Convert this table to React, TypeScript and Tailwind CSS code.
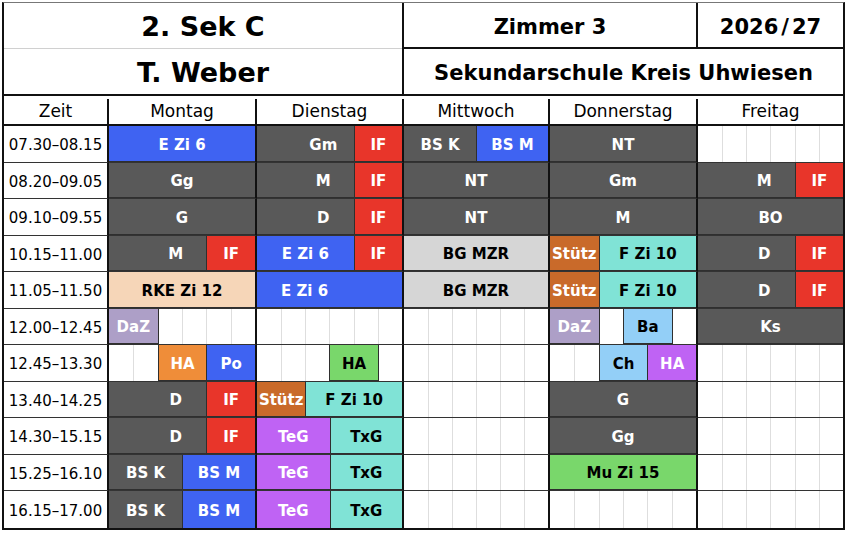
type Seg = { span: number; label?: string; color?: string; shift?: string };

const G = "bg-[#595959] text-white";
const B = "bg-[#3f63f2] text-white";
const R = "bg-[#e8352a] text-white";
const LG = "bg-[#d6d6d6] text-black";
const PE = "bg-[#f6d6b8] text-black";
const ST = "bg-[#c96a2a] text-white";
const TE = "bg-[#80e3d6] text-black";
const DZ = "bg-[#ad9fc7] text-white";
const OR = "bg-[#ef8d39] text-white";
const GR = "bg-[#79d76b] text-black";
const LB = "bg-[#93cff7] text-black";
const PU = "bg-[#bf63f4] text-white";

const S = "pl-[36px]";

const L = (span: number, label: string, color: string, shift = ""): Seg => ({ span, label, color, shift });
const E = (span: number): Seg => ({ span });

const spanClass: Record<number, string> = {
  1: "col-span-1",
  2: "col-span-2",
  3: "col-span-3",
  4: "col-span-4",
  5: "col-span-5",
  6: "col-span-6",
};

const days = ["Montag", "Dienstag", "Mittwoch", "Donnerstag", "Freitag"];

const rows: [string, Seg[][]][] = [
  ["07.30–08.15", [[L(6, "E Zi 6", B)], [L(4, "Gm", G, S), L(2, "IF", R)], [L(3, "BS K", G), L(3, "BS M", B)], [L(6, "NT", G)], [E(6)]]],
  ["08.20–09.05", [[L(6, "Gg", G)], [L(4, "M", G, S), L(2, "IF", R)], [L(6, "NT", G)], [L(6, "Gm", G)], [L(4, "M", G, S), L(2, "IF", R)]]],
  ["09.10–09.55", [[L(6, "G", G)], [L(4, "D", G, S), L(2, "IF", R)], [L(6, "NT", G)], [L(6, "M", G)], [L(6, "BO", G)]]],
  ["10.15–11.00", [[L(4, "M", G, S), L(2, "IF", R)], [L(4, "E Zi 6", B), L(2, "IF", R)], [L(6, "BG MZR", LG)], [L(2, "Stütz", ST), L(4, "F Zi 10", TE)], [L(4, "D", G, S), L(2, "IF", R)]]],
  ["11.05–11.50", [[L(6, "RKE Zi 12", PE)], [L(6, "E Zi 6", B, "pr-[50px]")], [L(6, "BG MZR", LG)], [L(2, "Stütz", ST), L(4, "F Zi 10", TE)], [L(4, "D", G, S), L(2, "IF", R)]]],
  ["12.00–12.45", [[L(2, "DaZ", DZ), E(4)], [E(6)], [E(6)], [L(2, "DaZ", DZ), E(1), L(2, "Ba", LB), E(1)], [L(6, "Ks", G)]]],
  ["12.45–13.30", [[E(2), L(2, "HA", OR), L(2, "Po", B)], [E(3), L(2, "HA", GR), E(1)], [E(6)], [E(2), L(2, "Ch", LB), L(2, "HA", PU)], [E(6)]]],
  ["13.40–14.25", [[L(4, "D", G, S), L(2, "IF", R)], [L(2, "Stütz", ST), L(4, "F Zi 10", TE)], [E(6)], [L(6, "G", G)], [E(6)]]],
  ["14.30–15.15", [[L(4, "D", G, S), L(2, "IF", R)], [L(3, "TeG", PU), L(3, "TxG", TE)], [E(6)], [L(6, "Gg", G)], [E(6)]]],
  ["15.25–16.10", [[L(3, "BS K", G), L(3, "BS M", B)], [L(3, "TeG", PU), L(3, "TxG", TE)], [E(6)], [L(6, "Mu Zi 15", GR)], [E(6)]]],
  ["16.15–17.00", [[L(3, "BS K", G), L(3, "BS M", B)], [L(3, "TeG", PU), L(3, "TxG", TE)], [E(6)], [E(6)], [E(6)]]],
];

function DayCell({ segs, lastCol, lastRow }: { segs: Seg[]; lastCol: boolean; lastRow: boolean }) {
  // empty stretches become single sub-columns
  const cells: Seg[] = segs.flatMap((s) => (s.label ? [s] : Array.from({ length: s.span }, () => E(1))));
  return (
    <div
      className={
        "grid grid-cols-6 " +
        (lastCol ? "" : "border-r-2 border-r-[#111] ") +
        (lastRow ? "" : "border-b border-b-[#333]")
      }
    >
      {cells.map((c, i) => {
        const prev = cells[i - 1];
        const edge =
          i === 0 ? "" : c.label || prev?.label ? "border-l border-l-[#2f2f2f] " : "border-l border-l-[#dedede] ";
        if (!c.label) return <div key={i} className={spanClass[c.span] + " bg-white " + edge} />;
        return (
          <div
            key={i}
            className={
              spanClass[c.span] +
              " flex items-center justify-center pt-[3px] text-[15px] font-bold whitespace-nowrap " +
              edge +
              c.color +
              " " +
              c.shift +
              (lastRow ? "" : " border-b border-b-[#2f2f2f]")
            }
          >
            {c.label}
          </div>
        );
      })}
    </div>
  );
}

export default function App() {
  return (
    <div className="h-[535px] w-[848px] bg-white pl-[2px] pt-[2px] font-['DejaVu_Sans','Liberation_Sans',sans-serif] text-black">
      <div className="w-[843px] border-x-2 border-b-2 border-t border-x-[#111] border-b-[#111] border-t-[#777]">
        {/* title */}
        <div className="flex border-b-2 border-[#111]">
          <div className="flex w-[400px] flex-col border-r-2 border-[#111]">
            <div className="flex h-[46px] items-center justify-center border-b border-[#d0d0d0] pt-[4px] text-[27px] font-bold">
              2. Sek C
            </div>
            <div className="flex h-[45px] items-center justify-center pt-[4px] text-[27px] font-bold">T. Weber</div>
          </div>
          <div className="flex flex-1 flex-col">
            <div className="flex h-[46px] border-b-2 border-[#111]">
              <div className="flex w-[294px] items-center justify-center border-r-2 border-[#111] pt-[5px] text-[21px] font-bold">
                Zimmer 3
              </div>
              <div className="flex flex-1 items-center justify-center pt-[5px] text-[21px] font-bold">
                2026<span className="px-[3px]">/</span>27
              </div>
            </div>
            <div className="flex h-[45px] items-center justify-center pt-[4px] text-[21px] font-bold">
              Sekundarschule Kreis Uhwiesen
            </div>
          </div>
        </div>

        {/* day header */}
        <div className="grid h-[30px] grid-cols-[105px_148px_147px_146px_148px_145px] border-b-2 border-[#111] pt-[3px] text-[17px]">
          <div className="flex items-center justify-center border-r-2 border-[#111]">Zeit</div>
          {days.map((d, i) => (
            <div
              key={d}
              className={"flex items-center justify-center " + (i < 4 ? "border-r-2 border-[#111]" : "")}
            >
              {d}
            </div>
          ))}
        </div>

        {/* lessons */}
        <div className="grid h-[402px] grid-cols-[105px_148px_147px_146px_148px_145px] grid-rows-[repeat(11,minmax(0,1fr))]">
          {rows.map(([time, dayCells], r) => {
            const lastRow = r === rows.length - 1;
            return [
              <div
                key={time}
                className={
                  "flex items-center justify-center border-r-2 border-r-[#111] pt-[3px] text-[15px] " +
                  (lastRow ? "" : "border-b border-b-[#333]")
                }
              >
                {time}
              </div>,
              ...dayCells.map((segs, d) => (
                <DayCell key={time + d} segs={segs} lastCol={d === 4} lastRow={lastRow} />
              )),
            ];
          })}
        </div>
      </div>
    </div>
  );
}
